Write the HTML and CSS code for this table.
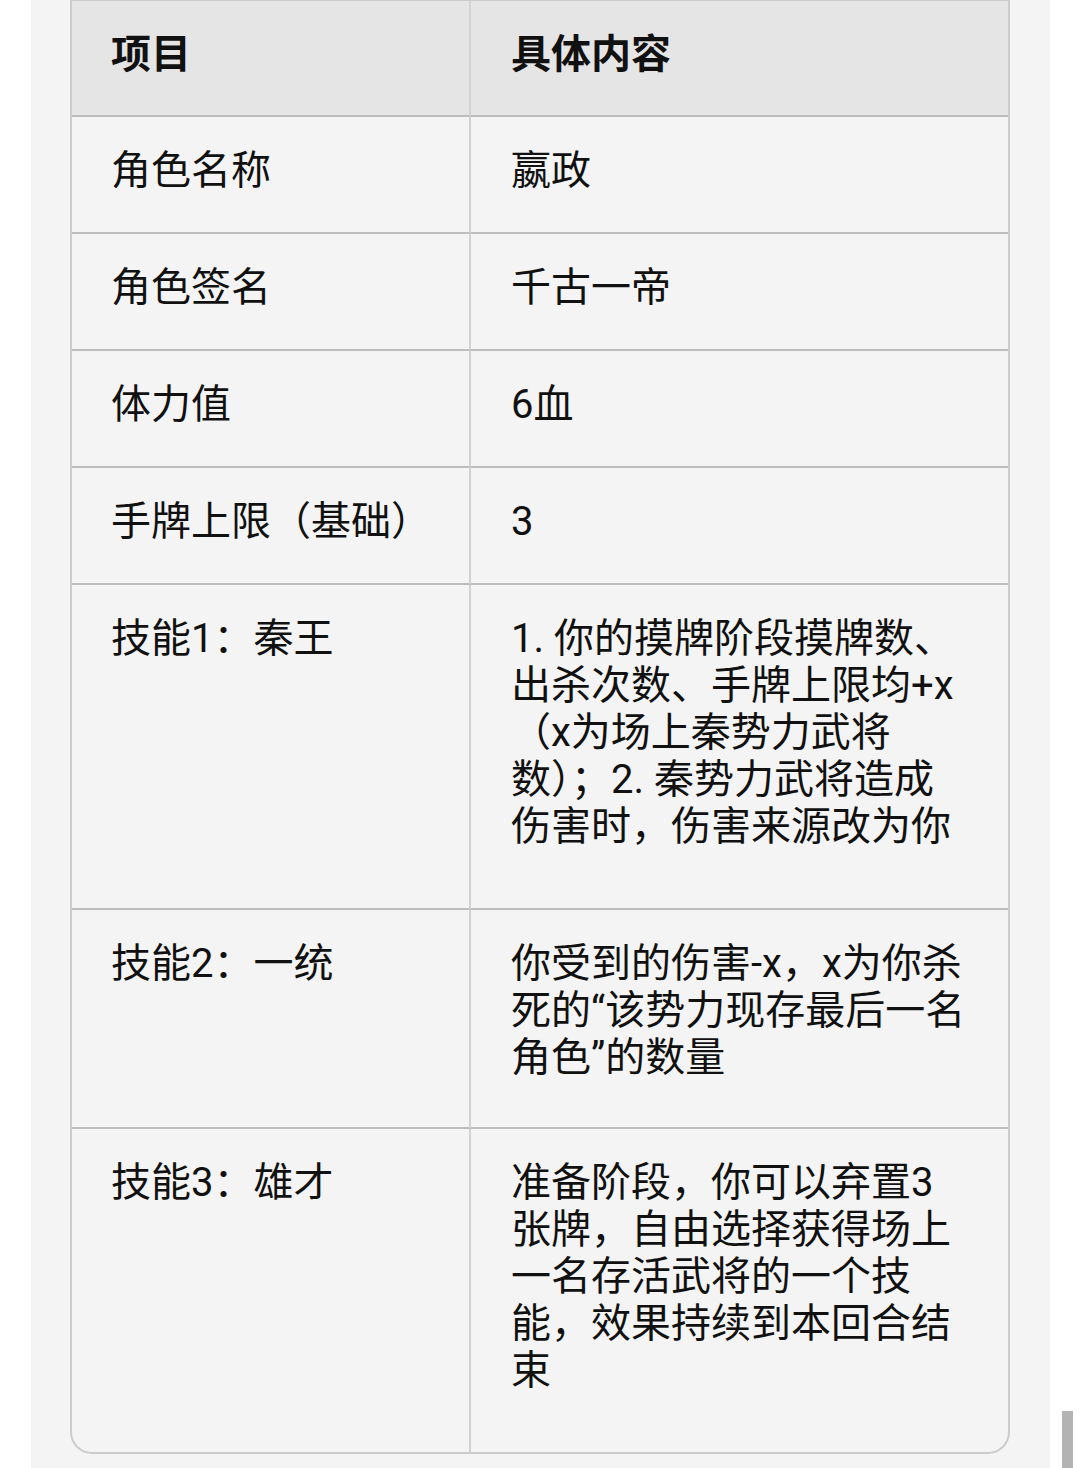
FILE: index.html
```html
<!DOCTYPE html>
<html lang="zh-CN">
<head>
<meta charset="utf-8">
<title>嬴政</title>
<link rel="stylesheet" href="styles.css">
</head>
<body>
<div class="page">
  <div class="panel">
    <table class="info">
      <thead>
        <tr class="row">
          <th class="c1">项目</th>
          <th class="c2">具体内容</th>
        </tr>
      </thead>
      <tbody>
        <tr class="row">
          <td class="c1">角色名称</td>
          <td class="c2">嬴政</td>
        </tr>
        <tr class="row">
          <td class="c1">角色签名</td>
          <td class="c2">千古一帝</td>
        </tr>
        <tr class="row">
          <td class="c1">体力值</td>
          <td class="c2">6血</td>
        </tr>
        <tr class="row">
          <td class="c1">手牌上限（基础）</td>
          <td class="c2">3</td>
        </tr>
        <tr class="row row-5">
          <td class="c1">技能1：秦王</td>
          <td class="c2">1. 你的摸牌阶段摸牌数、<br>出杀次数、手牌上限均+x<br>（x为场上秦势力武将<br>数）；2. 秦势力武将造成<br>伤害时，伤害来源改为你</td>
        </tr>
        <tr class="row row-3">
          <td class="c1">技能2：一统</td>
          <td class="c2">你受到的伤害-x，x为你杀<br>死的“该势力现存最后一名<br>角色”的数量</td>
        </tr>
        <tr class="row row-5 last">
          <td class="c1">技能3：雄才</td>
          <td class="c2">准备阶段，你可以弃置3<br>张牌，自由选择获得场上<br>一名存活武将的一个技<br>能，效果持续到本回合结<br>束</td>
        </tr>
      </tbody>
    </table>
  </div>
  <div class="scroll-thumb"></div>
</div>
</body>
</html>
```

FILE: styles.css
```css
html, body {
  margin: 0;
  padding: 0;
  background: #ffffff;
}

.page {
  position: relative;
  width: 1080px;
  height: 1468px;
  overflow: hidden;
}

.panel {
  margin-left: 31px;
  width: 1019px;
  height: 1468px;
  background: #f4f4f4;
  padding-left: 39px;
  box-sizing: border-box;
}

.info {
  width: 940px;
  border-collapse: separate;
  border-spacing: 0;
  border: 2px solid #cbcbcb;
  border-top-width: 1px;
  border-radius: 0 0 22px 22px;
  overflow: hidden;
  font-family: Roboto, "Noto Sans CJK SC", sans-serif;
  font-size: 40px;
  line-height: 47px;
  color: #111111;
  table-layout: fixed;
}

.info th,
.info td {
  text-align: left;
  vertical-align: top;
  padding: 30px 0 0 39px;
  border-bottom: 2px solid #bdbdbd;
  white-space: nowrap;
}

.info th {
  background: #e5e5e5;
  font-weight: 700;
  padding-top: 30px;
}

.info td {
  font-weight: 400;
}

.info .c1 {
  width: 399px;
  box-sizing: border-box;
  border-right: 2px solid #d2d2d2;
}

.info .c2 {
  padding-left: 40px;
}

.row {
  height: 117px;
}

thead .row {
  height: 116px;
}

.row-5 {
  height: 325px;
}

.row-3 {
  height: 219px;
}

.last td {
  border-bottom: none;
}

.row-5.last {
  height: 323px;
}

.scroll-thumb {
  position: absolute;
  left: 1062px;
  top: 1411px;
  width: 11px;
  height: 57px;
  background: #b3b3b3;
}
```
